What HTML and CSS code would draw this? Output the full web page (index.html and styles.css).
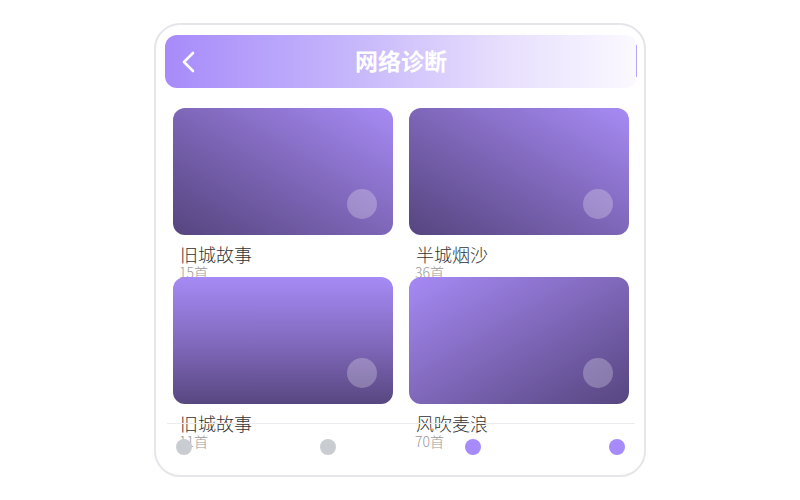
FILE: index.html
```html
<!DOCTYPE html>
<html lang="zh-CN">
<head>
<meta charset="utf-8">
<title>网络诊断</title>
<link rel="stylesheet" href="styles.css">
</head>
<body>
<div class="stage">
  <div class="phone">
    <header class="topbar">
      <svg class="back" width="14" height="22" viewBox="0 0 14 22"><polyline points="11,2 2,11 11,20" fill="none" stroke="#fff" stroke-width="2.6" stroke-linecap="round" stroke-linejoin="round"/></svg>
      <h1 class="title">网络诊断</h1>
      <span class="edge"></span>
    </header>
    <main class="grid">
      <div class="item">
        <div class="cover cover-a"><span class="play"></span></div>
        <div class="name">旧城故事</div>
        <div class="count">15首</div>
      </div>
      <div class="item">
        <div class="cover cover-a"><span class="play"></span></div>
        <div class="name">半城烟沙</div>
        <div class="count">36首</div>
      </div>
      <div class="item">
        <div class="cover cover-b"><span class="play"></span></div>
        <div class="name">旧城故事</div>
        <div class="count">11首</div>
      </div>
      <div class="item">
        <div class="cover cover-c"><span class="play"></span></div>
        <div class="name">风吹麦浪</div>
        <div class="count">70首</div>
      </div>
    </main>
    <nav class="tabbar">
      <span class="dot"></span>
      <span class="dot"></span>
      <span class="dot on"></span>
      <span class="dot on"></span>
    </nav>
  </div>
</div>
</body>
</html>
```

FILE: styles.css
```css
* { box-sizing: border-box; }
html, body { margin: 0; padding: 0; background: #fff; }
body { font-family: "Noto Sans CJK SC", "Noto Sans", sans-serif; }

.stage {
  width: 800px;
  height: 500px;
  display: flex;
  align-items: center;
  justify-content: center;
}

.phone {
  position: relative;
  width: 492px;
  height: 454px;
  border: 2px solid #e6e6ea;
  border-radius: 26px;
  padding: 10px 7px 0 9px;
  overflow: hidden;
  background: #fff;
}

.topbar {
  position: relative;
  height: 53px;
  border-radius: 12px;
  background: linear-gradient(to right, #a78bfa 0%, #c6b7fb 40%, #e6ddfd 70%, #fbf9ff 100%);
  display: flex;
  align-items: center;
  justify-content: center;
}

.back {
  position: absolute;
  left: 17px;
  top: 16px;
}

.title {
  margin: 0 0 3px 0;
  color: #fff;
  font-size: 23px;
  font-weight: 700;
  line-height: 1;
}

.edge {
  position: absolute;
  right: 0;
  top: 10px;
  width: 1px;
  height: 32px;
  background: #b9a6fb;
}

.grid {
  display: grid;
  grid-template-columns: 220px 220px;
  column-gap: 16px;
  row-gap: 42px;
  padding: 20px 0 0 8px;
}

.item {
  height: 127px;
}

.cover {
  position: relative;
  height: 127px;
  border-radius: 12px;
}
.cover-a { background: linear-gradient(30deg, #55457f 0%, #7e66b8 50%, #a78bf5 100%); }
.cover-b { background: linear-gradient(180deg, #a68af5 0%, #7f67b9 55%, #574780 100%); }
.cover-c { background: linear-gradient(150deg, #a68af5 0%, #7f67b9 50%, #564680 100%); }

.play {
  position: absolute;
  right: 16px;
  bottom: 16px;
  width: 30px;
  height: 30px;
  border-radius: 50%;
  background: rgba(255, 255, 255, 0.25);
}

.name {
  margin-top: 8px;
  padding-left: 7px;
  font-size: 18px;
  font-weight: 300;
  line-height: 22px;
  color: #333;
}

.count {
  padding-left: 6px;
  font-size: 14px;
  font-weight: 300;
  line-height: 15px;
  color: #9a9a9a;
}

.tabbar {
  position: absolute;
  left: 11px;
  right: 9px;
  bottom: 0;
  height: 52px;
  border-top: 1px solid #ececf0;
  display: flex;
  justify-content: space-between;
  padding: 15px 10px 0 9px;
}

.dot {
  width: 16px;
  height: 16px;
  border-radius: 50%;
  background: #c9ccd1;
}
.dot.on { background: #a78bfa; }
```
